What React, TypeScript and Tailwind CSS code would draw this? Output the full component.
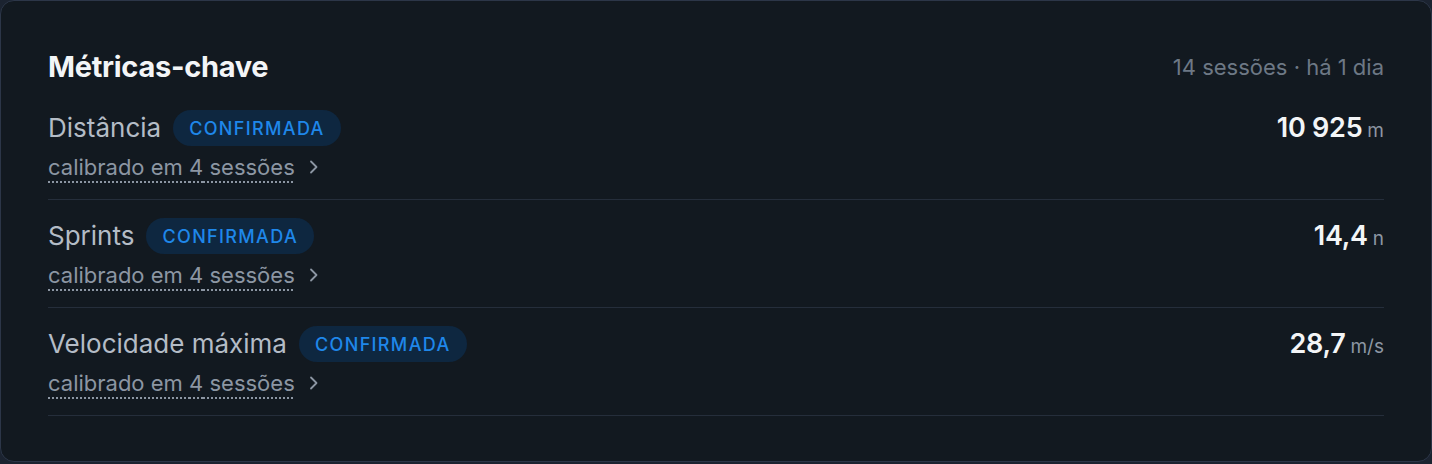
import React from 'react';

type Metric = {
  label: string;
  value: string;
  unit: string;
  sessions: number;
};

const metrics: Metric[] = [
  { label: 'Distância', value: '10 925', unit: 'm', sessions: 4 },
  { label: 'Sprints', value: '14,4', unit: 'n', sessions: 4 },
  { label: 'Velocidade máxima', value: '28,7', unit: 'm/s', sessions: 4 },
];

const Chevron: React.FC = () => (
  <svg width="16" height="20" viewBox="0 0 16 20" fill="none" className="text-[#8c96a3]">
    <path d="M5 4.5 10.5 10 5 15.5" stroke="currentColor" strokeWidth="1.8" strokeLinecap="round" strokeLinejoin="round" />
  </svg>
);

const MetricRow: React.FC<{ metric: Metric }> = ({ metric }) => (
  <div className="flex justify-between border-b border-[#252e3b] pt-[18px] pb-[17px]">
    <div className="flex flex-col">
      <div className="flex items-center gap-3">
        <span className="text-[26px] leading-[36px] text-[#b4bcc6]">{metric.label}</span>
        <span className="flex h-[36px] items-center rounded-full bg-[#0e2740] px-4 text-[18px] font-medium tracking-[0.075em] text-[#1f87ea]">
          CONFIRMADA
        </span>
      </div>
      <div className="mt-[6px] flex items-center gap-[11px]">
        <span className="text-[22px] leading-[30px] text-[#8c96a3] underline decoration-dotted decoration-[#8c96a3] decoration-[2px] underline-offset-[6px]">
          calibrado em {metric.sessions} sessões
        </span>
        <Chevron />
      </div>
    </div>
    <div className="flex items-baseline gap-[5px] leading-[36px]">
      <span className="text-[27px] font-semibold tracking-[-0.01em] text-[#f3f5f7]">{metric.value}</span>
      <span className="text-[19px] text-[#8c96a3]">{metric.unit}</span>
    </div>
  </div>
);

export default function App() {
  return (
    <div className="h-[464px] w-[1432px] bg-[#1b2330] font-['Inter',sans-serif]">
      <div className="h-[462px] rounded-[14px] border border-[#2c3648] bg-[#121920] px-[47px] pt-[46px]">
        <div className="flex items-center justify-between">
          <h2 className="text-[29px] leading-[40px] font-bold tracking-[-0.01em] text-[#f3f5f7]">Métricas-chave</h2>
          <span className="text-[22px] text-[#6d7885]">14 sessões · há 1 dia</span>
        </div>
        <div className="mt-[5px]">
          {metrics.map((m) => (
            <MetricRow key={m.label} metric={m} />
          ))}
        </div>
      </div>
    </div>
  );
}
